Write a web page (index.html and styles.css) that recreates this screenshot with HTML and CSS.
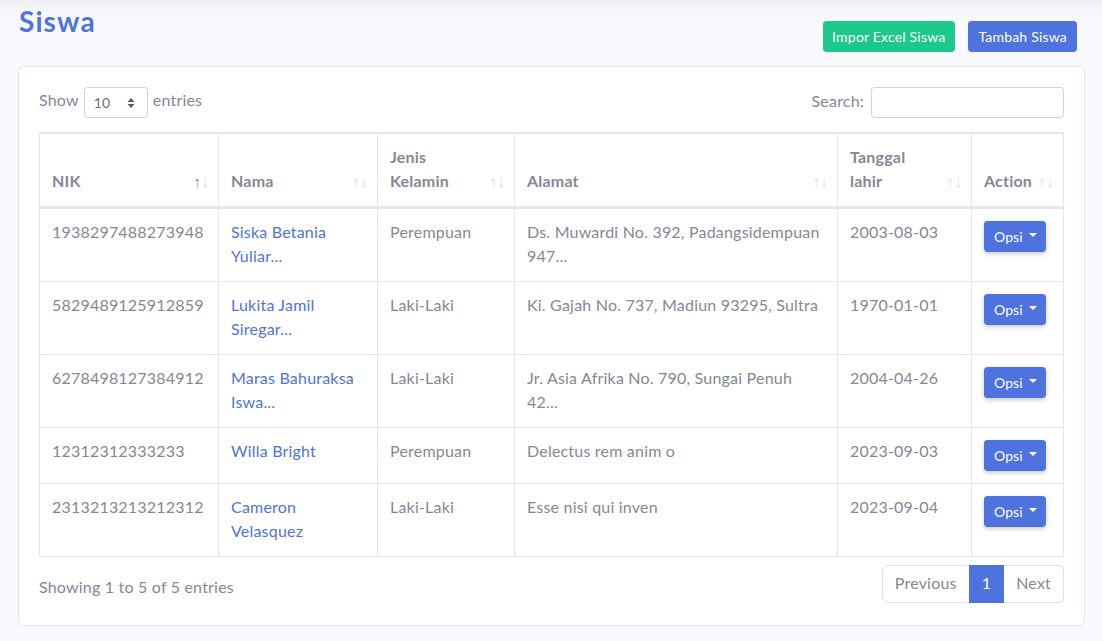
FILE: index.html
```html
<!DOCTYPE html>
<html lang="id">
<head>
<meta charset="utf-8">
<title>Siswa</title>
<link rel="stylesheet" href="styles.css">
</head>
<body>
<div class="container">
  <div class="page-head">
    <h1 class="page-title">Siswa</h1>
    <div class="head-actions">
      <a class="btn btn-sm btn-success" href="#">Impor Excel Siswa</a>
      <a class="btn btn-sm btn-primary" href="#">Tambah Siswa</a>
    </div>
  </div>

  <div class="card">
    <div class="card-body">
      <div class="dt-top">
        <label class="dt-length">Show
          <span class="select-sm"><span>10</span>
            <svg class="sel-arrows" width="8" height="12" viewBox="0 0 8 12"><path d="M4 1 L7.5 5 H0.5 Z M4 11 L0.5 7 H7.5 Z" fill="#5a5c69"/></svg>
          </span>
          entries</label>
        <label class="dt-search">Search: <input class="input-sm" type="search"></label>
      </div>

      <table class="dt-table">
        <colgroup>
          <col class="c-nik"><col class="c-nama"><col class="c-jk"><col class="c-alamat"><col class="c-tgl"><col class="c-act">
        </colgroup>
        <thead>
          <tr>
            <th class="sorting sorted-asc">NIK</th>
            <th class="sorting">Nama</th>
            <th class="sorting">Jenis Kelamin</th>
            <th class="sorting">Alamat</th>
            <th class="sorting">Tanggal lahir</th>
            <th class="sorting">Action</th>
          </tr>
        </thead>
        <tbody>
          <tr>
            <td>1938297488273948</td>
            <td><a href="#">Siska Betania Yuliar...</a></td>
            <td>Perempuan</td>
            <td>Ds. Muwardi No. 392, Padangsidempuan 947...</td>
            <td>2003-08-03</td>
            <td><button class="btn btn-sm btn-primary btn-opsi">Opsi<span class="caret"></span></button></td>
          </tr>
          <tr>
            <td>5829489125912859</td>
            <td><a href="#">Lukita Jamil Siregar...</a></td>
            <td>Laki-Laki</td>
            <td>Ki. Gajah No. 737, Madiun 93295, Sultra</td>
            <td>1970-01-01</td>
            <td><button class="btn btn-sm btn-primary btn-opsi">Opsi<span class="caret"></span></button></td>
          </tr>
          <tr>
            <td>6278498127384912</td>
            <td><a href="#">Maras Bahuraksa Iswa...</a></td>
            <td>Laki-Laki</td>
            <td>Jr. Asia Afrika No. 790, Sungai Penuh 42...</td>
            <td>2004-04-26</td>
            <td><button class="btn btn-sm btn-primary btn-opsi">Opsi<span class="caret"></span></button></td>
          </tr>
          <tr>
            <td>12312312333233</td>
            <td><a href="#">Willa Bright</a></td>
            <td>Perempuan</td>
            <td>Delectus rem anim o</td>
            <td>2023-09-03</td>
            <td><button class="btn btn-sm btn-primary btn-opsi">Opsi<span class="caret"></span></button></td>
          </tr>
          <tr>
            <td>2313213213212312</td>
            <td><a href="#">Cameron Velasquez</a></td>
            <td>Laki-Laki</td>
            <td>Esse nisi qui inven</td>
            <td>2023-09-04</td>
            <td><button class="btn btn-sm btn-primary btn-opsi">Opsi<span class="caret"></span></button></td>
          </tr>
        </tbody>
      </table>

      <div class="dt-bottom">
        <div class="dt-info">Showing 1 to 5 of 5 entries</div>
        <ul class="pagination">
          <li class="page-item disabled"><a class="page-link" href="#">Previous</a></li>
          <li class="page-item active"><a class="page-link" href="#">1</a></li>
          <li class="page-item disabled"><a class="page-link" href="#">Next</a></li>
        </ul>
      </div>
    </div>
  </div>
</div>
</body>
</html>
```
FILE: styles.css
```css
* { box-sizing: border-box; }

html, body { height: 100%; }

body {
  margin: 0;
  font-family: Lato, "Open Sans", sans-serif;
  font-size: 16px;
  line-height: 1.5;
  letter-spacing: 0.2px;
  color: #858796;
  background: linear-gradient(#eff0f5 0, #f8f9fc 18px) #f8f9fc;
}

a { color: #4e73df; text-decoration: none; }

.container {
  padding: 0 17px 0 18px;
}

.page-head {
  display: flex;
  justify-content: space-between;
  align-items: flex-start;
}

.page-title {
  margin: 5px 0 0 1px;
  font-size: 28px;
  line-height: 1.2;
  font-weight: 700;
  color: #4e73df;
  letter-spacing: 1.1px;
}

.head-actions {
  display: flex;
  gap: 13px;
  margin: 21px 8px 0 0;
}

.btn {
  display: inline-block;
  font-family: inherit;
  border: 1px solid transparent;
  color: #fff;
  text-align: center;
  white-space: nowrap;
  cursor: pointer;
}

.btn-sm {
  font-size: 14px;
  line-height: 21px;
  padding: 4px 8px;
  border-radius: 3.2px;
}

.btn-success { background: #1cc88a; border-color: #1cc88a; }
.btn-primary { background: #4e73df; border-color: #4e73df; }

.head-actions .btn-success { padding: 4px 9px 4px 8px; }
.head-actions .btn-primary { padding: 4px 9px; }

.card {
  margin-top: 14px;
  background: #fff;
  border: 1px solid #e3e6f0;
  border-radius: 5.6px;
}

.card-body {
  padding: 20px;
}

.dt-top {
  display: flex;
  justify-content: space-between;
  align-items: center;
  height: 31px;
}

.dt-length, .dt-search {
  display: flex;
  align-items: center;
  gap: 5px;
  font-weight: 400;
}

.dt-length { margin-top: -5px; }
.dt-search { gap: 7px; margin-top: -3px; }

.select-sm {
  display: inline-flex;
  align-items: center;
  justify-content: space-between;
  width: 64px;
  height: 31px;
  padding: 0 12px 0 9px;
  border: 1px solid #d1d3e2;
  border-radius: 3.2px;
  font-size: 14px;
  color: #6e707e;
  background: #fff;
  margin-top: 5px;
}

.input-sm {
  width: 193px;
  height: 31px;
  border: 1px solid #d1d3e2;
  border-radius: 3.2px;
  background: #fff;
  padding: 0 8px;
  font-family: inherit;
  margin-top: 3px;
}

.dt-table {
  width: 100%;
  margin-top: 14px;
  border: 1px solid #e3e6f0;
  border-collapse: separate;
  border-spacing: 0;
  table-layout: fixed;
  color: #858796;
}

.c-nik { width: 179px; }
.c-nama { width: 159px; }
.c-jk { width: 137px; }
.c-alamat { width: 323px; }
.c-tgl { width: 134px; }
.c-act { width: 91px; }

.dt-table th, .dt-table td {
  border-top: 1px solid #e3e6f0;
  border-right: 1px solid #e3e6f0;
  padding: 11px 12px 13px;
  text-align: left;
}

.dt-table th:last-child, .dt-table td:last-child {
  border-right: 0;
}

.dt-table th {
  position: relative;
  vertical-align: bottom;
  font-weight: 700;
  padding-right: 30px;
  border-bottom: 2px solid #e3e6f0;
}

.dt-table td {
  vertical-align: top;
}

.sorting::before, .sorting::after {
  position: absolute;
  bottom: 17px;
  font-family: "Liberation Sans", sans-serif;
  font-size: 15px;
  line-height: 1;
  font-weight: 400;
  letter-spacing: 0;
  opacity: 0.3;
  color: #858796;
}

.sorting::before { content: "\2191"; right: 17px; }
.sorting::after { content: "\2193"; right: 9px; }
.sorted-asc::before { opacity: 1; }

.dt-table td .btn-opsi { margin: 1px 0 -1px; }

.btn-opsi {
  display: inline-flex;
  align-items: center;
  padding: 4px 8px 4px 9px;
  box-shadow: 0 2px 4px rgba(58, 59, 69, 0.25);
  vertical-align: top;
  letter-spacing: 0.1px;
}

.caret {
  display: inline-block;
  margin-left: 6px;
  border-top: 4.2px solid #fff;
  border-left: 4.2px solid transparent;
  border-right: 4.2px solid transparent;
  margin-top: -3px;
}

.dt-bottom {
  display: flex;
  justify-content: space-between;
  align-items: flex-start;
  margin-top: 6px;
}

.dt-info {
  padding-top: 12px;
}

.pagination {
  display: flex;
  list-style: none;
  margin: 2px 0;
  padding: 0;
}

.page-link {
  display: block;
  padding: 7px 12px 9px;
  line-height: 20px;
  border: 1px solid #dddfeb;
  margin-left: -1px;
  color: #858796;
  background: #fff;
}

.page-item:first-child .page-link {
  margin-left: 0;
  border-radius: 5.6px 0 0 5.6px;
}

.page-item:last-child .page-link {
  border-radius: 0 5.6px 5.6px 0;
}

.page-item.active .page-link {
  background: #4e73df;
  border-color: #4e73df;
  color: #fff;
  position: relative;
}
```
